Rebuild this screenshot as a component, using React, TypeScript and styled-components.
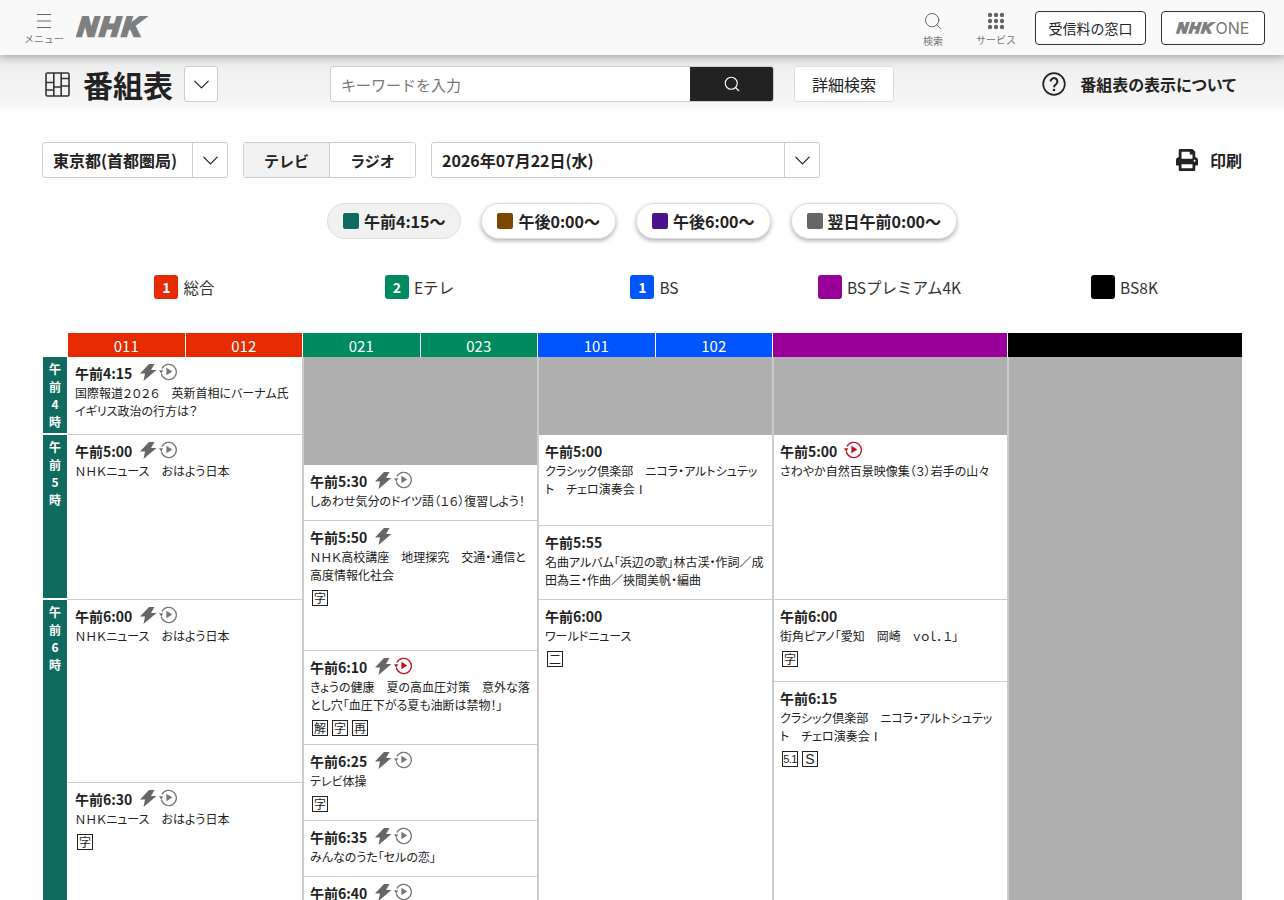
import React from "react";
import styled, { createGlobalStyle } from "styled-components";
import { Search, ChevronDown } from "lucide-react";
import { FaPrint } from "react-icons/fa";

const Global = createGlobalStyle`
  html, body { margin: 0; padding: 0; background: #fff; overflow: hidden; }
  body { font-family: "Noto Sans CJK JP", "Noto Sans", sans-serif; color: #222; }
  * { box-sizing: border-box; }
`;
const Page = styled.div`width: 1284px; height: 900px; overflow: hidden; display: flex; flex-direction: column;`;
const TopBar = styled.header`
  height: 55px; flex: none; background: #f9f9f9; box-shadow: 0 2px 8px rgba(0,0,0,.28);
  position: relative; z-index: 2; display: flex; align-items: center; padding: 0 19px 0 24px;
`;
const NavItem = styled.div<{ $w: number; $ml?: number }>`
  width: ${p => p.$w}px; margin-left: ${p => p.$ml ?? 0}px; display: flex; flex-direction: column; align-items: center; color: #777;
  font-size: 10px; line-height: 12px; gap: 4px; padding-top: 2px;
  svg { display: block; }
`;
const Logo = styled.div<{ $size: number }>`
  font-family: "Liberation Sans", sans-serif; font-weight: 700; font-style: italic; color: #7f7f7f;
  font-size: ${p => p.$size}px; line-height: 1; letter-spacing: ${p => p.$size * 0.1}px;
  -webkit-text-stroke: ${p => p.$size * 0.1}px #7f7f7f; transform: skewX(-6deg);
`;
const LogoSlot = styled.div`margin-left: 14px; margin-right: auto;`;
const OutlineButton = styled.div<{ $w: number; $ml: number }>`
  width: ${p => p.$w}px; height: 34px; margin-left: ${p => p.$ml}px; border: 1px solid #333; border-radius: 4px;
  background: #fff; display: flex; align-items: center; justify-content: center; gap: 2px; font-size: 14px;
`;
const OneText = styled.span`font-family: "Inter", sans-serif; color: #777; font-size: 16px; font-weight: 400;`;
const SubBar = styled.div`
  height: 58px; flex: none; background: linear-gradient(#e6e6e6 0, #f1f1f1 30%, #f5f5f5 80%, #fff 100%);
  display: flex; align-items: center; padding: 0 48px 0 45px;
`;
const PageTitle = styled.h1`font-size: 30px; font-weight: 700; margin: 0 0 0 13px; line-height: 36px; color: #222; width: 89px; white-space: nowrap;`;
const SquareSelect = styled.div`
  width: 34px; height: 36px; margin-left: 12px; background: #fff; border: 1px solid #ccc; border-radius: 3px;
  display: flex; align-items: center; justify-content: center;
`;
const SearchBox = styled.div`
  width: 444px; height: 36px; margin-left: 112px; display: flex; border-radius: 3px; overflow: hidden;
  border: 1px solid #ccc; background: #fff;
`;
const Keyword = styled.div`flex: 1; padding-left: 10px; line-height: 35px; font-size: 15px; color: #777;`;
const SearchBtn = styled.div`width: 84px; margin: -1px; background: #222; color: #fff; display: flex; align-items: center; justify-content: center;`;
const DetailBtn = styled.div`
  width: 100px; height: 36px; margin-left: 20px; background: #fff; border: 1px solid #ddd; border-radius: 3px;
  display: flex; align-items: center; justify-content: center; font-size: 16px; color: #222;
`;
const HelpLink = styled.div`margin-left: auto; display: flex; align-items: center; gap: 14px; font-size: 16px; font-weight: 700; font-feature-settings: "palt";`;
const Controls = styled.div`display: flex; align-items: center; height: 36px; margin: 29px 42px 0 42px;`;
const Select = styled.div<{ $w: number; $ml?: number }>`
  width: ${p => p.$w}px; margin-left: ${p => p.$ml ?? 0}px; height: 36px; border: 1px solid #ccc; border-radius: 3px; display: flex; align-items: center;
  font-size: 16px; font-weight: 700; padding-left: 10px; background: #fff;
`;
const SelectArrow = styled.div`
  margin-left: auto; width: 35px; height: 34px; border-left: 1px solid #ccc; display: flex; align-items: center; justify-content: center;
`;
const Tabs = styled.div`width: 173px; height: 36px; margin-left: 15px; display: flex; border: 1px solid #ccc; border-radius: 3px; overflow: hidden;`;
const Tab = styled.div<{ $on?: boolean }>`
  flex: 1; display: flex; align-items: center; justify-content: center; font-size: 15px; font-weight: 700;
  background: ${p => p.$on ? "#f1f1f1" : "#fff"}; border-right: ${p => p.$on ? "1px solid #ccc" : "0"};
`;
const PrintLink = styled.div`margin-left: auto; display: flex; align-items: center; gap: 12px; font-size: 16px; font-weight: 700;`;
const Pills = styled.div`display: flex; justify-content: center; gap: 20px; margin-top: 25px; height: 36px;`;
const Pill = styled.div<{ $on?: boolean }>`
  height: 36px; border-radius: 18px; padding: 0 15px; display: flex; align-items: center; gap: 5px;
  font-size: 16px; font-weight: 700; background: ${p => p.$on ? "#f1f1f1" : "#fff"}; border: 1px solid #ddd;
  box-shadow: ${p => p.$on ? "none" : "0 2px 4px rgba(0,0,0,.3)"};
`;
const Swatch = styled.span<{ $c: string }>`width: 16px; height: 16px; border-radius: 2px; background: ${p => p.$c};`;
const Legend = styled.div`display: grid; grid-template-columns: repeat(5, 235px); margin: 36px 0 0 67px; height: 24px;`;
const LegendItem = styled.div`display: flex; align-items: center; justify-content: center; gap: 5px; font-size: 15.5px; color: #333;`;
const ChanMark = styled.span<{ $c: string }>`
  width: 24px; height: 24px; border-radius: 3px; background: ${p => p.$c}; color: #fff; font-size: 14px; font-weight: 700;
  display: flex; align-items: center; justify-content: center;
`;
const Table = styled.div`margin: 34px 0 0 43px; display: flex; flex-direction: column;`;
const HeadRow = styled.div`display: flex; margin-left: 25px; height: 24px;`;
const ChanHead = styled.div<{ $c: string }>`
  width: 235px; background: ${p => p.$c}; display: flex; color: #fff; font-size: 15px; line-height: 26px; border-right: 1px solid #fff;
  & > span { flex: 1; text-align: center; }
  & > span + span { border-left: 1px solid #fff; }
`;
const Body = styled.div`display: flex; align-items: flex-start;`;
const Hours = styled.div`width: 25px; display: flex; flex-direction: column; gap: 2px; padding-right: 1px; flex: none;`;
const Hour = styled.div<{ $h: number }>`
  height: ${p => p.$h}px; background: #0f6b60; color: #fff; font-size: 12px; font-weight: 700; line-height: 17.5px;
  text-align: center; padding-top: 3px;
  & > span { display: block; }
`;
const Column = styled.div`
  width: 235px; flex: none; display: flex; flex-direction: column; border-right: 1px solid #ccc; height: 600px; overflow: hidden;
  & + & { border-left: 1px solid #ccc; }
  &:last-child { width: 234px; border-right: 0; }
`;
const Blocked = styled.div<{ $h: number }>`height: ${p => p.$h}px; background: #b0b0b0; flex: none;`;
const Slot = styled.div<{ $h: number }>`
  height: ${p => p.$h}px; flex: none; padding: 4px 6px 0 7px; border-bottom: 1px solid #ccc; font-feature-settings: "palt";
  ${Column} + ${Column} & { padding-left: 6px; }
`;
const TimeRow = styled.div`display: flex; align-items: center; height: 23px; font-size: 14px; font-weight: 700; gap: 7px;`;
const IconRow = styled.span`display: inline-flex; align-items: center; gap: 2px; margin-top: -2px;`;
const Desc = styled.div`font-size: 12px; line-height: 18px; color: #222;`;
const Marks = styled.div`display: flex; gap: 4px; margin-top: 6px; margin-left: 2px;`;
const Mark = styled.span<{ $latin?: boolean; $big?: boolean }>`
  width: 16px; height: 16px; border: 1px solid #222; display: flex; align-items: center; justify-content: center; color: #222; white-space: nowrap;
  font-family: ${p => p.$latin ? '"Liberation Sans", sans-serif' : "inherit"};
  font-size: ${p => p.$big ? "14px" : p.$latin ? "11px" : "12px"}; line-height: 14px; letter-spacing: ${p => p.$latin && !p.$big ? "-.6px" : "0"};
`;

const Bolt = () => (
  <svg width="18" height="18" viewBox="0 0 18 18"><path d="M10 1 1 10.500H6L4.500 18 17.500 7H12L15.500 1z" fill="#666" /></svg>
);
const Replay = ({ red }: { red?: boolean }) => {
  const c = red ? "#c1121f" : "#777";
  return (
    <svg width="19" height="19" viewBox="0 0 18 18" fill="none">
      <path d="M2.800 6.200A7.200 7.200 0 1 1 2.200 11" stroke={c} strokeWidth="1.200" />
      <path d="M0 7.800 4 7.800 2.200 11.200z" fill={c} />
      <path d="M7 5.400 12.600 9 7 12.600z" fill={c} />
    </svg>
  );
};
const Chevron = () => <ChevronDown size={27} strokeWidth={1.1} color="#222" />;

type P = { h: number; t: string; bolt?: boolean; rep?: boolean | "red"; d: string[]; m?: string[] };
const cols: ({ block: number } | P)[][] = [
  [
    { h: 78, t: "午前4:15", bolt: true, rep: true, d: ["国際報道２０２６　英新首相にバーナム氏", "イギリス政治の行方は？"] },
    { h: 165, t: "午前5:00", bolt: true, rep: true, d: ["ＮＨＫニュース　おはよう日本"] },
    { h: 183, t: "午前6:00", bolt: true, rep: true, d: ["ＮＨＫニュース　おはよう日本"] },
    { h: 180, t: "午前6:30", bolt: true, rep: true, d: ["ＮＨＫニュース　おはよう日本"], m: ["字"] },
  ],
  [
    { block: 108 },
    { h: 56, t: "午前5:30", bolt: true, rep: true, d: ["しあわせ気分のドイツ語（１６）復習しよう！"] },
    { h: 130, t: "午前5:50", bolt: true, d: ["ＮＨＫ高校講座　地理探究　交通・通信と", "高度情報化社会"], m: ["字"] },
    { h: 94, t: "午前6:10", bolt: true, rep: "red", d: ["きょうの健康　夏の高血圧対策　意外な落", "とし穴「血圧下がる夏も油断は禁物！」"], m: ["解", "字", "再"] },
    { h: 76, t: "午前6:25", bolt: true, rep: true, d: ["テレビ体操"], m: ["字"] },
    { h: 56, t: "午前6:35", bolt: true, rep: true, d: ["みんなのうた「セルの恋」"] },
    { h: 60, t: "午前6:40", bolt: true, rep: true, d: [] },
  ],
  [
    { block: 78 },
    { h: 91, t: "午前5:00", d: ["クラシック倶楽部　ニコラ・アルトシュテッ", "ト　チェロ演奏会Ⅰ"] },
    { h: 74, t: "午前5:55", d: ["名曲アルバム「浜辺の歌」林古渓・作詞／成", "田為三・作曲／挾間美帆・編曲"] },
    { h: 400, t: "午前6:00", d: ["ワールドニュース"], m: ["二"] },
  ],
  [
    { block: 78 },
    { h: 165, t: "午前5:00", rep: "red", d: ["さわやか自然百景映像集（３）岩手の山々"] },
    { h: 82, t: "午前6:00", d: ["街角ピアノ「愛知　岡崎　ｖｏｌ．１」"], m: ["字"] },
    { h: 400, t: "午前6:15", d: ["クラシック倶楽部　ニコラ・アルトシュテッ", "ト　チェロ演奏会Ⅰ"], m: ["5.1", "S"] },
  ],
  [{ block: 600 }],
];

export default function App() {
  return (
    <Page>
      <Global />
      <TopBar>
        <NavItem $w={40}>
          <svg width="14" height="16" viewBox="0 0 14 16" stroke="#666" strokeWidth="1"><path d="M0 1.500h14M0 8h14M0 14.500h14" /></svg>
          メニュー
        </NavItem>
        <LogoSlot><Logo $size={27}>NHK</Logo></LogoSlot>
        <NavItem $w={40}><Search size={20} strokeWidth={1.2} color="#666" />検索</NavItem>
        <NavItem $w={40} $ml={23}>
          <svg width="18" height="18" viewBox="0 0 18 18" fill="#666">
            {[2, 8, 14].flatMap(y => [2, 8, 14].map(x => <circle key={`${x}-${y}`} cx={x + 1} cy={y + 1} r="2.200" />))}
          </svg>
          サービス
        </NavItem>
        <OutlineButton $w={111} $ml={19}>受信料の窓口</OutlineButton>
        <OutlineButton $w={104} $ml={15}><Logo $size={15}>NHK</Logo><OneText>ONE</OneText></OutlineButton>
      </TopBar>
      <SubBar>
        <svg width="25" height="25" viewBox="0 0 25 25" fill="none" stroke="#333" strokeWidth="1.600">
          <rect x="1" y="1" width="23" height="23" rx="1.500" />
          <path d="M8.800 1v23M16.200 1v23M1 10.500h7.800M1 18h7.800M8.800 15h7.400M16.200 6.500h7.800M16.200 14h7.800" />
        </svg>
        <PageTitle>番組表</PageTitle>
        <SquareSelect><Chevron /></SquareSelect>
        <SearchBox>
          <Keyword>キーワードを入力</Keyword>
          <SearchBtn><Search size={18} strokeWidth={1.5} /></SearchBtn>
        </SearchBox>
        <DetailBtn>詳細検索</DetailBtn>
        <HelpLink>
          <svg width="24" height="24" viewBox="0 0 24 24" fill="none">
            <circle cx="12" cy="12" r="10.800" stroke="#222" strokeWidth="1.700" />
            <path d="M8.600 9.400a3.400 3.400 0 1 1 5.300 2.900c-1.300.8-1.900 1.400-1.900 3" stroke="#222" strokeWidth="2" />
            <circle cx="12" cy="18" r="1.300" fill="#222" />
          </svg>
          番組表の表示について
        </HelpLink>
      </SubBar>
      <Controls>
        <Select $w={186}>東京都(首都圏局)<SelectArrow><Chevron /></SelectArrow></Select>
        <Tabs><Tab $on>テレビ</Tab><Tab>ラジオ</Tab></Tabs>
        <Select $w={389} $ml={15}>2026年07月22日(水)<SelectArrow><Chevron /></SelectArrow></Select>
        <PrintLink><FaPrint size={22} color="#222" />印刷</PrintLink>
      </Controls>
      <Pills>
        <Pill $on><Swatch $c="#0f6b60" />午前4:15〜</Pill>
        <Pill><Swatch $c="#7c4700" />午後0:00〜</Pill>
        <Pill><Swatch $c="#4a148c" />午後6:00〜</Pill>
        <Pill><Swatch $c="#666" />翌日午前0:00〜</Pill>
      </Pills>
      <Legend>
        <LegendItem><ChanMark $c="#e62b00">1</ChanMark>総合</LegendItem>
        <LegendItem><ChanMark $c="#008a60">2</ChanMark>Eテレ</LegendItem>
        <LegendItem><ChanMark $c="#0055ff">1</ChanMark>BS</LegendItem>
        <LegendItem><ChanMark $c="#990099" />BSプレミアム4K</LegendItem>
        <LegendItem><ChanMark $c="#000" />BS8K</LegendItem>
      </Legend>
      <Table>
        <HeadRow>
          <ChanHead $c="#e62b00"><span>011</span><span>012</span></ChanHead>
          <ChanHead $c="#008a60"><span>021</span><span>023</span></ChanHead>
          <ChanHead $c="#0055ff"><span>101</span><span>102</span></ChanHead>
          <ChanHead $c="#990099" />
          <ChanHead $c="#000" />
        </HeadRow>
        <Body>
          <Hours>
            <Hour $h={76}>{["午", "前", "4", "時"].map((c, i) => <span key={i}>{c}</span>)}</Hour>
            <Hour $h={163}>{["午", "前", "5", "時"].map((c, i) => <span key={i}>{c}</span>)}</Hour>
            <Hour $h={320}>{["午", "前", "6", "時"].map((c, i) => <span key={i}>{c}</span>)}</Hour>
          </Hours>
          {cols.map((col, i) => (
            <Column key={i}>
              {col.map((s, j) => "block" in s ? <Blocked key={j} $h={s.block} /> : (
                <Slot key={j} $h={s.h}>
                  <TimeRow>
                    {s.t}
                    {(s.bolt || s.rep) && <IconRow>{s.bolt && <Bolt />}{s.rep && <Replay red={s.rep === "red"} />}</IconRow>}
                  </TimeRow>
                  {s.d.map((l, k) => <Desc key={k}>{l}</Desc>)}
                  {s.m && <Marks>{s.m.map(x => <Mark key={x} $latin={/[0-9S]/.test(x)} $big={x === "S"}>{x}</Mark>)}</Marks>}
                </Slot>
              ))}
            </Column>
          ))}
        </Body>
      </Table>
    </Page>
  );
}
